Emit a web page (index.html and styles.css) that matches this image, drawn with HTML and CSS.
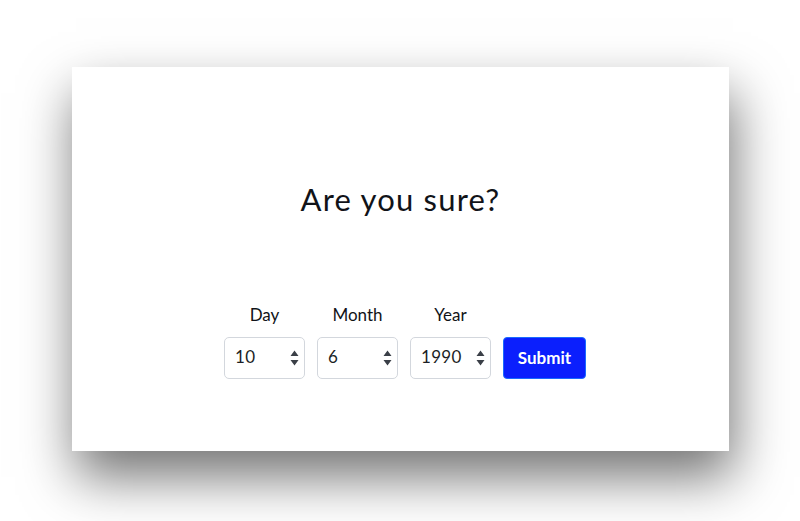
FILE: index.html
```html
<!DOCTYPE html>
<html>
<head>
<meta charset="utf-8">
<link rel="stylesheet" href="styles.css">
</head>
<body>
<div class="page">
  <div class="card">
    <h1 class="title">Are you sure?</h1>
    <form class="dob">
      <div class="field">
        <div class="label">Day</div>
        <div class="select"><span class="value">10</span><svg class="arrows" width="9" height="16" viewBox="0 0 9 16"><path d="M4.5 0.5 L8.5 6 L0.5 6 Z M4.5 15.5 L8.5 10 L0.5 10 Z" fill="#3a3f47"/></svg></div>
      </div>
      <div class="field">
        <div class="label">Month</div>
        <div class="select"><span class="value">6</span><svg class="arrows" width="9" height="16" viewBox="0 0 9 16"><path d="M4.5 0.5 L8.5 6 L0.5 6 Z M4.5 15.5 L8.5 10 L0.5 10 Z" fill="#3a3f47"/></svg></div>
      </div>
      <div class="field">
        <div class="label">Year</div>
        <div class="select"><span class="value">1990</span><svg class="arrows" width="9" height="16" viewBox="0 0 9 16"><path d="M4.5 0.5 L8.5 6 L0.5 6 Z M4.5 15.5 L8.5 10 L0.5 10 Z" fill="#3a3f47"/></svg></div>
      </div>
      <div class="field">
        <div class="label"></div>
        <button type="button" class="submit">Submit</button>
      </div>
    </form>
  </div>
</div>
</body>
</html>
```
FILE: styles.css
```css
html, body {
  margin: 0;
  padding: 0;
  background: #ffffff;
}
body {
  font-family: Lato, "Liberation Sans", sans-serif;
  color: #111318;
  width: 800px;
  height: 521px;
  overflow: hidden;
}
.page {
  display: flex;
  justify-content: center;
  padding-top: 67px;
  padding-left: 1px;
}
.card {
  width: 657px;
  height: 384px;
  background: #ffffff;
  box-shadow: 4px 26px 50px rgba(0, 0, 0, 0.55);
  display: flex;
  flex-direction: column;
  align-items: center;
}
.title {
  margin: 114px 0 0 0;
  font-size: 31px;
  line-height: 36px;
  font-weight: 400;
  letter-spacing: 1.2px;
}
.dob {
  margin-top: 88px;
  margin-left: 9px;
  display: flex;
  gap: 12px;
  align-items: flex-end;
}
.field {
  display: flex;
  flex-direction: column;
  align-items: center;
  gap: 12px;
}
.label {
  font-size: 17px;
  line-height: 20px;
  height: 20px;
}
.select {
  box-sizing: border-box;
  width: 81px;
  height: 42px;
  border: 1px solid #d3d7dd;
  border-radius: 5px;
  background: #fff;
  display: flex;
  align-items: center;
  justify-content: space-between;
  padding: 0 5px 1px 10px;
}
.value {
  font-size: 17px;
  color: #1c1f26;
  letter-spacing: 0.3px;
  padding-bottom: 2px;
}
.arrows {
  display: block;
}
.submit {
  box-sizing: border-box;
  width: 83px;
  height: 42px;
  border: 1px solid #1a6bff;
  border-radius: 4px;
  background: #0b1ffd;
  color: #ffffff;
  font-family: Lato, "Liberation Sans", sans-serif;
  font-size: 17px;
  font-weight: 700;
  padding: 0 0 2px 0;
}
```
